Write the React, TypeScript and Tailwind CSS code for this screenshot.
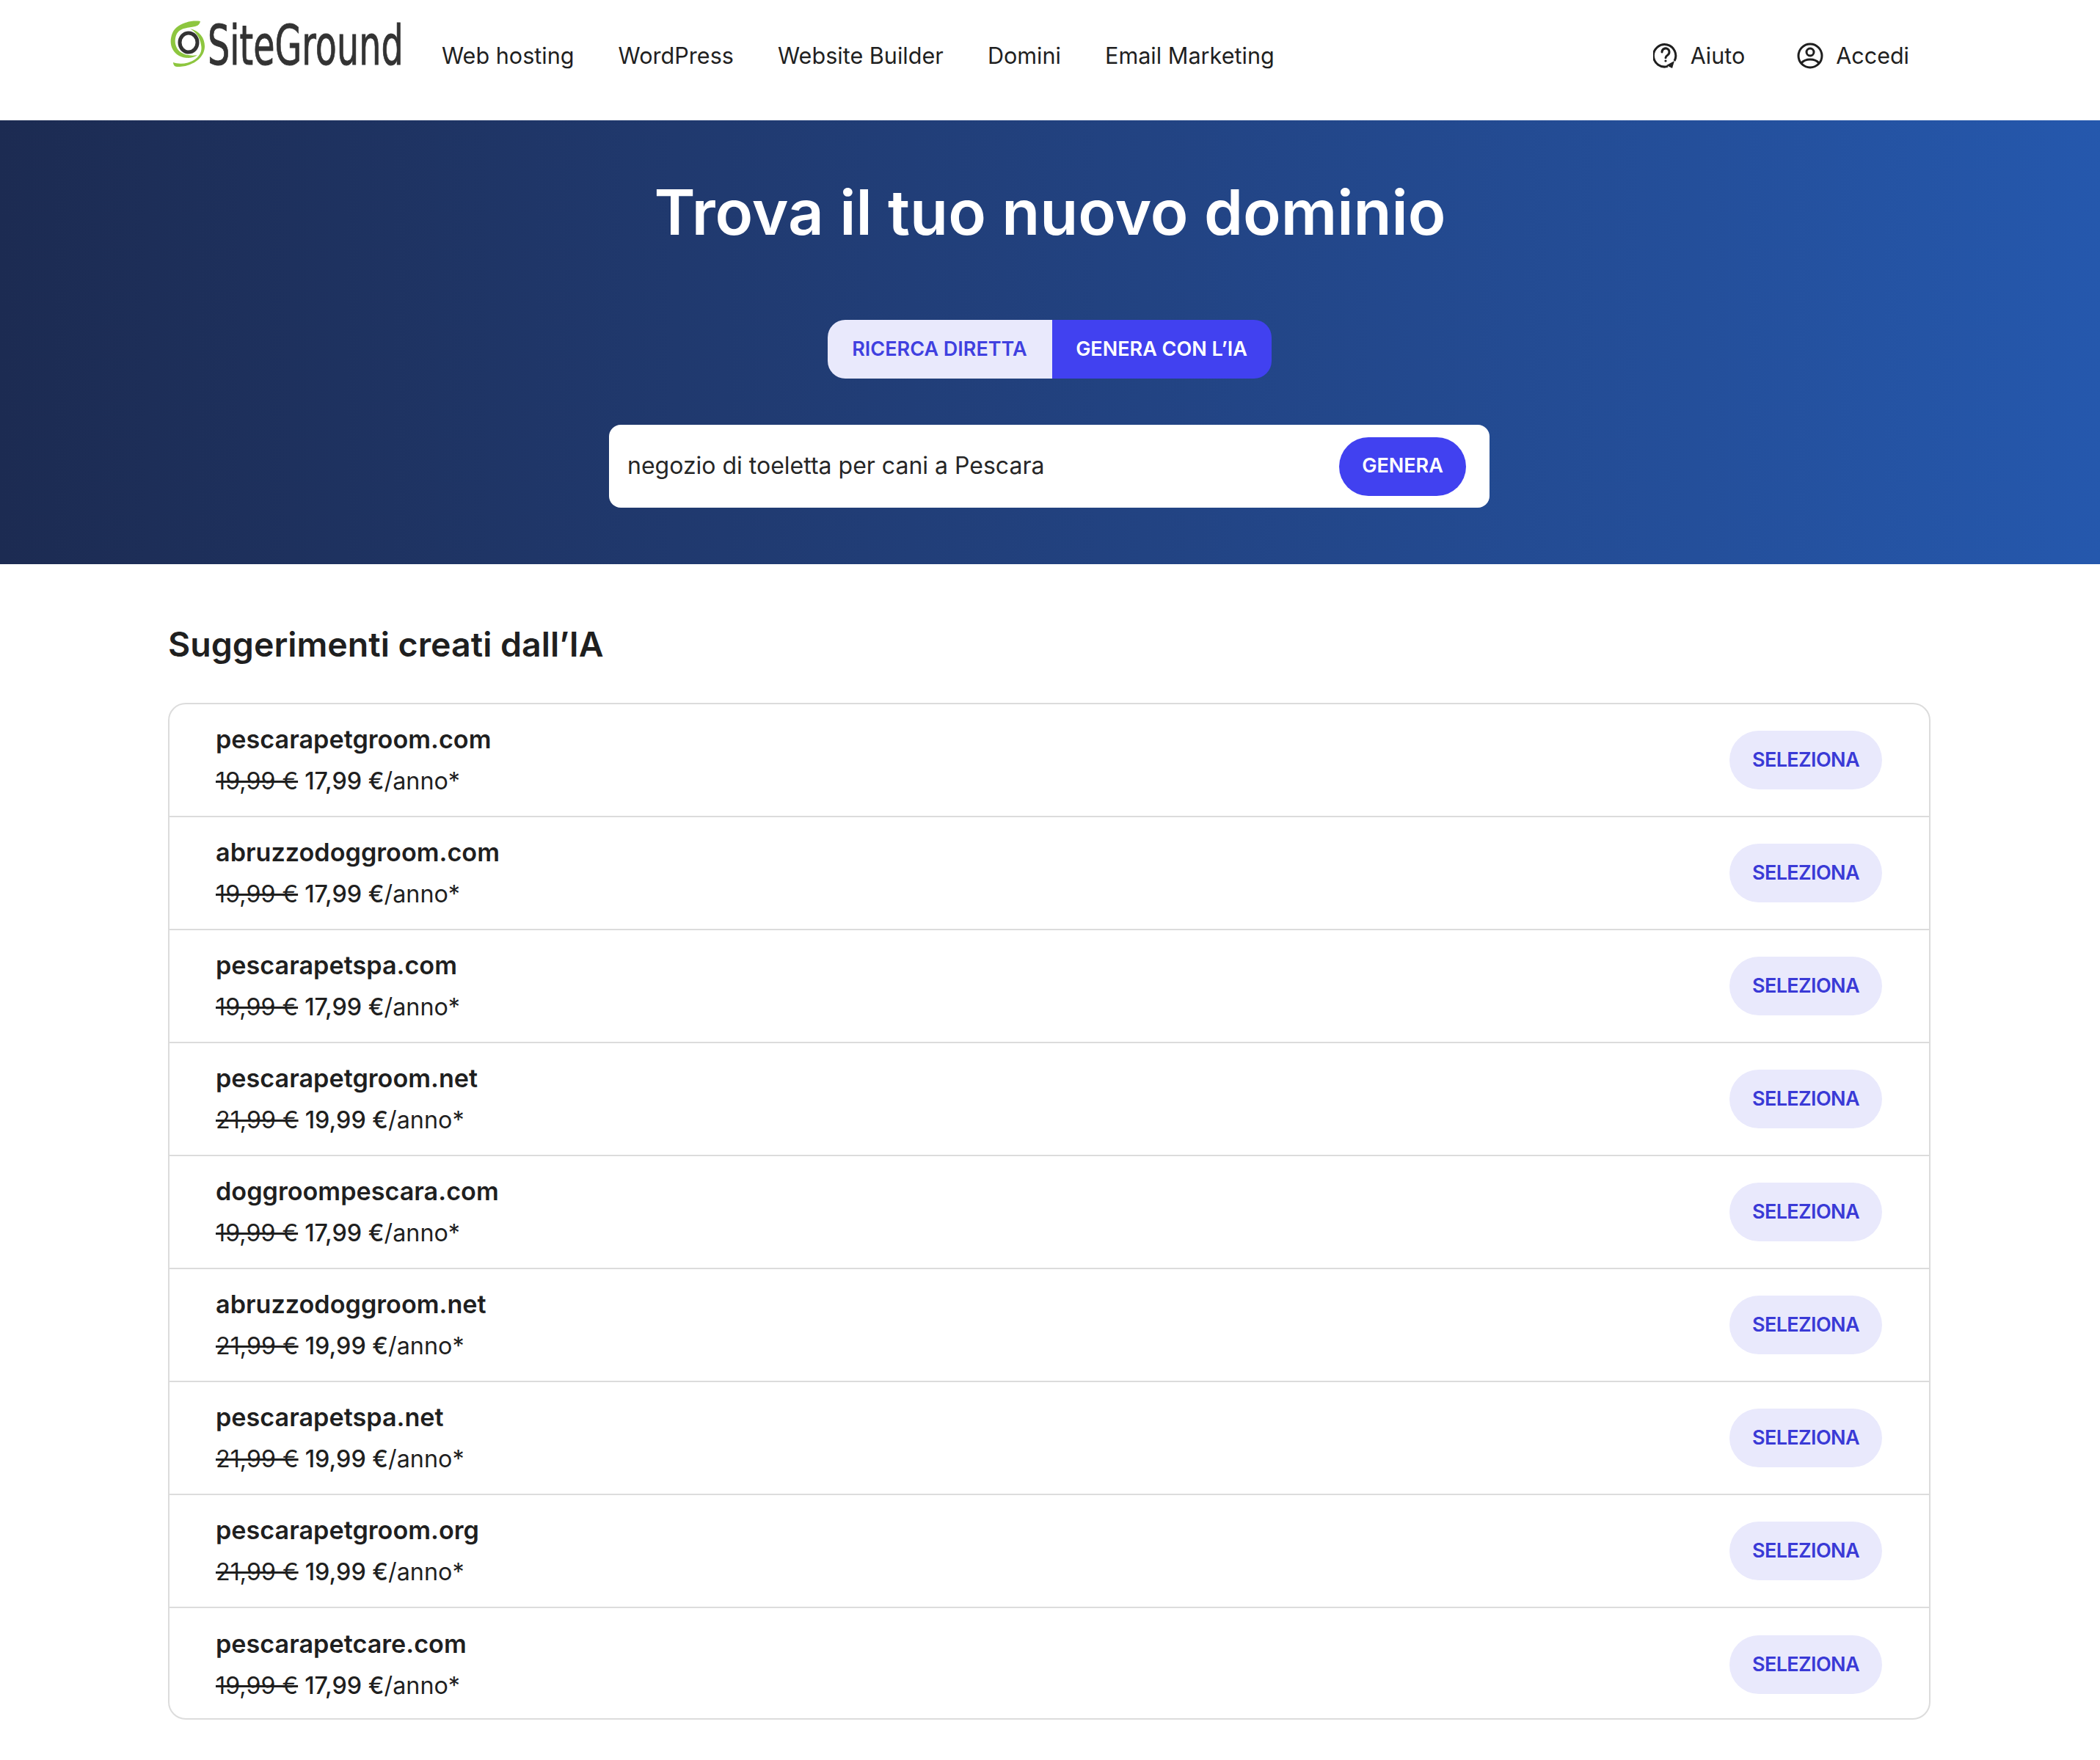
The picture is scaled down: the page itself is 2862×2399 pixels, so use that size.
const navLinks = ['Web hosting', 'WordPress', 'Website Builder', 'Domini', 'Email Marketing'];

const domains = [
  { name: 'pescarapetgroom.com', oldPrice: '19,99 €', price: '17,99 €' },
  { name: 'abruzzodoggroom.com', oldPrice: '19,99 €', price: '17,99 €' },
  { name: 'pescarapetspa.com', oldPrice: '19,99 €', price: '17,99 €' },
  { name: 'pescarapetgroom.net', oldPrice: '21,99 €', price: '19,99 €' },
  { name: 'doggroompescara.com', oldPrice: '19,99 €', price: '17,99 €' },
  { name: 'abruzzodoggroom.net', oldPrice: '21,99 €', price: '19,99 €' },
  { name: 'pescarapetspa.net', oldPrice: '21,99 €', price: '19,99 €' },
  { name: 'pescarapetgroom.org', oldPrice: '21,99 €', price: '19,99 €' },
  { name: 'pescarapetcare.com', oldPrice: '19,99 €', price: '17,99 €' },
];

function Logo() {
  return (
    <div className="flex h-[66px] w-[315px] shrink-0 items-center">
      <svg width="48" height="64" viewBox="0 0 48 64" className="shrink-0">
        {/* swirl */}
        <path d="M41 1C26 -1 8 5 3 17C-2 29 1 42 12 48C20 52 30 52 37 47C29 49 20 47 14 43C6 37 5 26 9 18C14 9 27 10 34 8C38 7 40 5 41 1Z" fill="#8dc63f" />
        <path d="M27 11C40 14 47 24 47 35C47 50 32 63 9 63C6 63 4 60 4 57C12 60 24 59 32 54C40 49 44 42 42 33C40 22 35 16 27 11Z" fill="#8dc63f" />
        <ellipse cx="25" cy="30" rx="12" ry="13" fill="none" stroke="#333333" strokeWidth="5" />
      </svg>
      <div className="ml-[3px] mt-[4px] h-[64px] w-[264px]">
        <span className="block origin-left scale-x-[0.635] whitespace-nowrap font-['DejaVu_Sans',sans-serif] text-[75px] leading-[64px] text-[#333333] [-webkit-text-stroke:1px_#333333]">SiteGround</span>
      </div>
    </div>
  );
}

function HelpIcon() {
  return (
    <svg width="34" height="36" viewBox="0 0 34 36" fill="none" stroke="#1f1f1f" strokeWidth="3">
      <path d="M20 32.4A15.2 15.2 0 1 1 29 25" />
      <path d="M29 25L26 35L18 31" fill="#1f1f1f" stroke="none" />
      <path d="M12 13a5 5 0 1 1 7.6 4.2c-1.6 1-2.6 1.8-2.6 3.6" strokeLinecap="round" />
      <circle cx="17" cy="25" r="1.6" fill="#1f1f1f" stroke="none" />
    </svg>
  );
}

function UserIcon() {
  return (
    <svg width="36" height="36" viewBox="0 0 36 36" fill="none" stroke="#1f1f1f" strokeWidth="3">
      <circle cx="18" cy="18" r="16" />
      <circle cx="18" cy="13" r="5" />
      <path d="M6 28C9 24.5 13 23 18 23C23 23 27 24.5 30 28" />
    </svg>
  );
}

export default function App() {
  return (
    <div className="min-h-[2399px] bg-white font-['Inter',sans-serif] text-[#1f1f1f]">
      <header className="flex h-[164px] items-start px-[232px] pt-[27px]">
        <Logo />
        <nav className="ml-[55px] flex h-[98px] items-center gap-[60px] text-[30.6px] font-normal">
          {navLinks.map(link => (
            <a key={link} href="#" className="whitespace-nowrap">{link}</a>
          ))}
        </nav>
        <div className="ml-auto mr-[28px] flex h-[98px] items-center text-[30.5px]">
          <a href="#" className="flex items-center gap-[17px]"><HelpIcon /> Aiuto</a>
          <a href="#" className="ml-[71px] flex items-center gap-[17px]"><UserIcon /> Accedi</a>
        </div>
      </header>

      <section className="flex h-[605px] flex-col items-center bg-gradient-to-r from-[#1c2b52] to-[#2558ad] pt-[73px]">
        <h1 className="text-[85px] font-semibold leading-[106px] text-white">Trova il tuo nuovo dominio</h1>
        <div className="mr-[2px] mt-[93px] flex h-[80px] overflow-hidden rounded-[24px] text-[27px] font-semibold">
          <button className="w-[306px] bg-[#e9e9fc] text-[#4040e0]">RICERCA DIRETTA</button>
          <button className="w-[299px] bg-[#4141f0] text-white">GENERA CON L’IA</button>
        </div>
        <div className="mr-[2px] mt-[63px] flex h-[113px] w-[1200px] items-center justify-between rounded-[16px] bg-white pl-[25px] pr-[32px]">
          <span className="-mt-[2px] text-[32px] text-[#262626]">negozio di toeletta per cani a Pescara</span>
          <button className="h-[80px] w-[173px] rounded-[40px] bg-[#4141f0] text-[27px] font-semibold text-white">GENERA</button>
        </div>
      </section>

      <main className="ml-[229px] w-[2402px] pt-[80px]">
        <h2 className="text-[46.5px] font-semibold leading-[58px] text-[#1f1f1f]">Suggerimenti creati dall’IA</h2>
        <div className="mt-[51px] flex flex-col rounded-[24px] border-2 border-[#dcdcdc]">
          {domains.map((d, i) => (
            <div
              key={d.name}
              className={`flex h-[154px] shrink-0 items-center justify-between pl-[63px] pr-[64px] ${i < domains.length - 1 ? 'border-b-2 border-[#dcdcdc]' : '-mb-[4px]'}`}
            >
              <div>
                <div className="text-[34.2px] font-semibold leading-[44px]">{d.name}</div>
                <div className="mt-[13px] text-[32.3px] leading-[44px]">
                  <span className="line-through">{d.oldPrice}</span>{' '}
                  <span className="font-medium">{d.price}</span>/anno*
                </div>
              </div>
              <button className="h-[80px] w-[208px] rounded-[40px] bg-[#e9e9fc] text-[27px] font-semibold tracking-[-0.6px] text-[#3a3ad6]">SELEZIONA</button>
            </div>
          ))}
        </div>
      </main>
    </div>
  );
}
